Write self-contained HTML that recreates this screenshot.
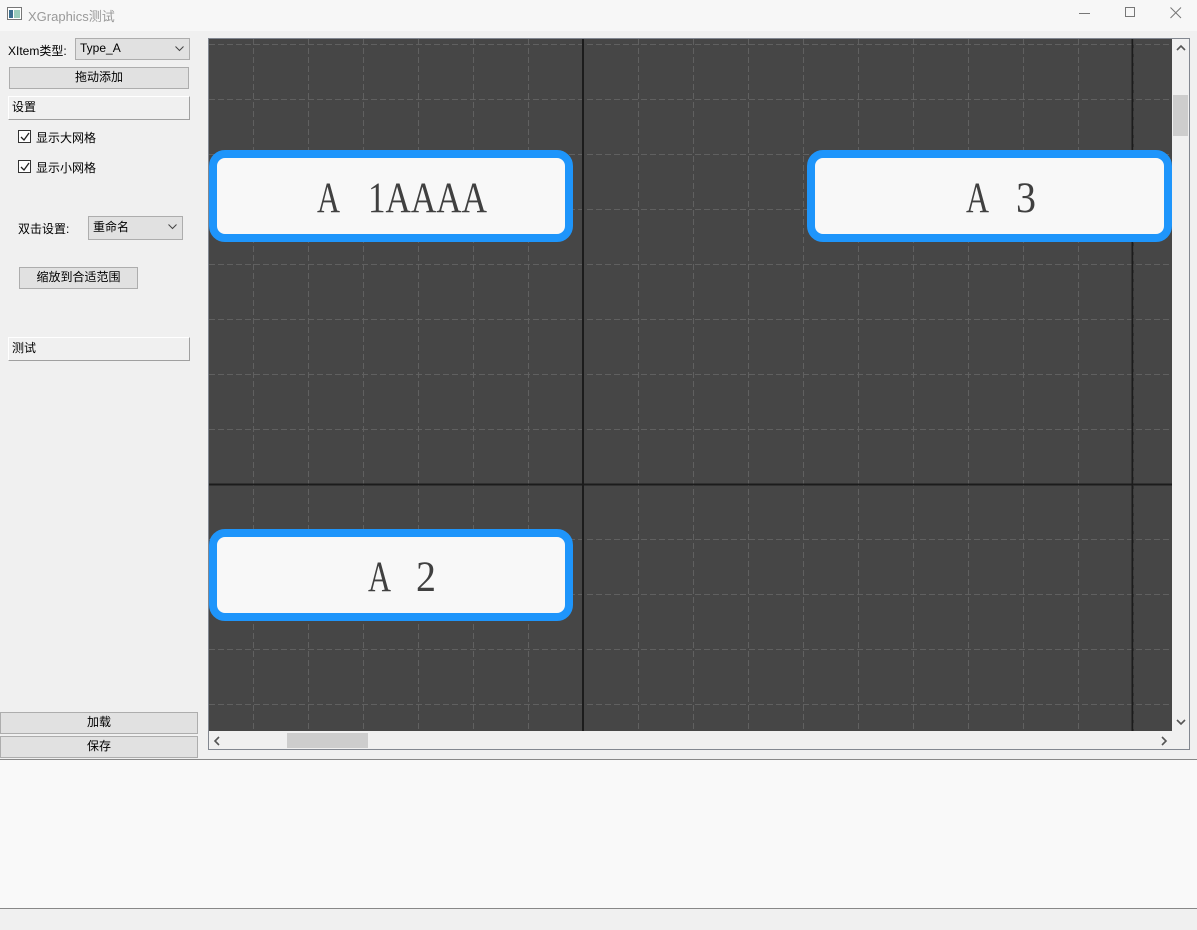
<!DOCTYPE html>
<html><head><meta charset="utf-8"><style>
*{margin:0;padding:0;box-sizing:border-box}
body{width:1197px;height:930px;overflow:hidden;background:#f0f0f0;position:relative;font-family:"Liberation Sans","Noto Sans CJK SC",sans-serif;font-size:12px;color:#000}
.a{position:absolute}
.btn{position:absolute;background:#e1e1e1;border:1px solid #adadad;text-align:center;line-height:19px;font-size:12px}
.combo{position:absolute;background:#e1e1e1;border:1px solid #adadad;padding-left:4px;line-height:19px;font-size:12px}
.combo svg{position:absolute;right:5px;top:7px}
.grp{position:absolute;border-bottom:1px solid #a0a0a0;border-right:1px solid #a0a0a0;border-top:1px solid #fff;border-left:1px solid #fff;padding-left:3px;line-height:20px}
.cb{position:absolute;width:13px;height:13px;border:1px solid #333;background:#fff}
</style></head><body>
<div class="a" style="left:0;top:0;width:1197px;height:31px;background:#f7f7f7"></div>
<svg class="a" style="left:7px;top:7px" width="16" height="14"><rect x="0.5" y="0.5" width="14" height="12" fill="#fff" stroke="#777"/><rect x="2" y="3" width="4" height="8" fill="#3a6e8f"/><rect x="7" y="3" width="6" height="8" fill="#9cb"/></svg>
<div class="a" style="left:28px;top:6px;font-size:13px;color:#999">XGraphics测试</div>
<div class="a" style="left:1079px;top:13px;width:11px;height:1px;background:#777"></div>
<div class="a" style="left:1125px;top:7px;width:10px;height:10px;border:1px solid #777"></div>
<svg class="a" style="left:1170px;top:7px" width="12" height="12"><path d="M0.5 0.5L11 11M11 0.5L0.5 11" stroke="#777" stroke-width="1"/></svg>

<div class="a" style="left:8px;top:42px">XItem类型:</div>
<div class="combo" style="left:75px;top:38px;width:115px;height:22px">Type_A<svg width="9" height="6"><path d="M0.5 0.5L4.5 4.5L8.5 0.5" stroke="#444" fill="none"/></svg></div>
<div class="btn" style="left:9px;top:67px;width:180px;height:22px">拖动添加</div>
<div class="grp" style="left:8px;top:96px;width:182px;height:24px">设置</div>
<div class="cb" style="left:18px;top:130px"></div><svg class="a" style="left:19px;top:131px" width="12" height="12"><path d="M2 6L5 9L10 2" stroke="#222" fill="none" stroke-width="1.3"/></svg>
<div class="a" style="left:36px;top:129px">显示大网格</div>
<div class="cb" style="left:18px;top:160px"></div><svg class="a" style="left:19px;top:161px" width="12" height="12"><path d="M2 6L5 9L10 2" stroke="#222" fill="none" stroke-width="1.3"/></svg>
<div class="a" style="left:36px;top:159px">显示小网格</div>
<div class="a" style="left:18px;top:220px">双击设置:</div>
<div class="combo" style="left:88px;top:216px;width:95px;height:24px;line-height:21px">重命名<svg width="9" height="6"><path d="M0.5 0.5L4.5 4.5L8.5 0.5" stroke="#444" fill="none"/></svg></div>
<div class="btn" style="left:19px;top:267px;width:119px;height:22px">缩放到合适范围</div>
<div class="grp" style="left:8px;top:337px;width:182px;height:24px">测试</div>
<div class="btn" style="left:0;top:712px;width:198px;height:22px">加载</div>
<div class="btn" style="left:0;top:736px;width:198px;height:22px">保存</div>

<div class="a" style="left:208px;top:38px;width:982px;height:712px;border:1px solid #828790;background:#f0f0f0"></div>
<svg class="a" style="left:209px;top:39px" width="963" height="692">
<rect width="963" height="692" fill="#464646"/>
<g stroke="#606060" stroke-width="1" stroke-dasharray="6,3">
<path d="M44.5 0V692M99.5 0V692M154.5 0V692M209.5 0V692M264.5 0V692M319.5 0V692M429.5 0V692M484.5 0V692M539.5 0V692M594.5 0V692M649.5 0V692M704.5 0V692M759.5 0V692M814.5 0V692M869.5 0V692M924.5 0V692"/>
<path d="M0 5.5H963M0 60.5H963M0 115.5H963M0 170.5H963M0 225.5H963M0 280.5H963M0 335.5H963M0 390.5H963M0 500.5H963M0 555.5H963M0 610.5H963M0 665.5H963"/>
</g>
<g stroke="#1c1c1c" stroke-width="2"><path d="M374 0V692M923.5 0V692M0 445.5H963"/></g>
<g font-family="'Liberation Serif',serif" font-size="43" fill="#404040">
<rect x="4" y="115" width="356" height="84" rx="12" fill="#f8f8f8" stroke="#1e95fb" stroke-width="8"/>
<text x="108" y="173" textLength="23" lengthAdjust="spacingAndGlyphs">A</text>
<text x="159" y="173" textLength="119" lengthAdjust="spacingAndGlyphs">1AAAA</text>
<rect x="602" y="115" width="357" height="84" rx="12" fill="#f8f8f8" stroke="#1e95fb" stroke-width="8"/>
<text x="757" y="173" textLength="23" lengthAdjust="spacingAndGlyphs">A</text>
<text x="807" y="173" textLength="20" lengthAdjust="spacingAndGlyphs">3</text>
<rect x="4" y="494" width="356" height="84" rx="12" fill="#f8f8f8" stroke="#1e95fb" stroke-width="8"/>
<text x="159" y="552" textLength="23" lengthAdjust="spacingAndGlyphs">A</text>
<text x="207" y="552" textLength="20" lengthAdjust="spacingAndGlyphs">2</text>
</g>
</svg>
<div class="a" style="left:1172px;top:39px;width:17px;height:692px;background:#f0f0f0"></div>
<svg class="a" style="left:1176px;top:44px" width="10" height="8"><path d="M1 6L5 2L9 6" stroke="#555" stroke-width="1.6" fill="none"/></svg>
<div class="a" style="left:1173px;top:95px;width:15px;height:41px;background:#cdcdcd"></div>
<svg class="a" style="left:1176px;top:718px" width="10" height="8"><path d="M1 2L5 6L9 2" stroke="#555" stroke-width="1.6" fill="none"/></svg>
<div class="a" style="left:209px;top:731px;width:963px;height:18px;background:#f0f0f0"></div>
<svg class="a" style="left:213px;top:736px" width="8" height="10"><path d="M6 1L2 5L6 9" stroke="#555" stroke-width="1.6" fill="none"/></svg>
<div class="a" style="left:287px;top:733px;width:81px;height:15px;background:#cdcdcd"></div>
<svg class="a" style="left:1160px;top:736px" width="8" height="10"><path d="M2 1L6 5L2 9" stroke="#555" stroke-width="1.6" fill="none"/></svg>

<div class="a" style="left:0;top:759px;width:1197px;height:150px;background:#f9f9f9;border-top:1px solid #888;border-bottom:1px solid #888"></div>
</body></html>
